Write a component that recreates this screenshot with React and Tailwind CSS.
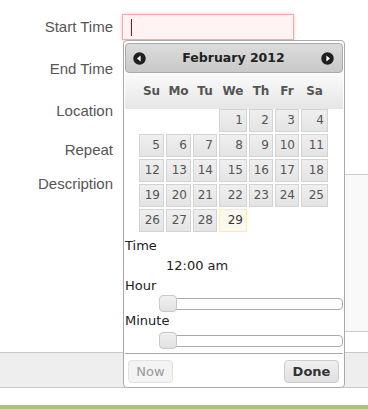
import React from 'react';

const dejavu = { fontFamily: '"DejaVu Sans", Verdana, sans-serif' };

const weekdays = ['Su', 'Mo', 'Tu', 'We', 'Th', 'Fr', 'Sa'];

// February 2012 starts on a Wednesday
const days = [null, null, null, ...Array.from({ length: 29 }, (_, i) => i + 1)];

function Arrow({ dir }) {
  return (
    <svg width="13" height="13" viewBox="0 0 13 13">
      <circle cx="6.5" cy="6.5" r="6.2" fill="#1f1f1f" />
      {dir === 'prev' ? <path d="M4 6.5 L7.6 3.6 L7.6 9.4 Z" fill="#fff" /> : <path d="M9 6.5 L5.4 3.6 L5.4 9.4 Z" fill="#fff" />}
    </svg>
  );
}

function Slider() {
  return (
    <div className="relative ml-[34px] h-[17px] flex items-center">
      <div className="w-full h-[12px] border border-[#aaa] rounded-[4px] bg-white" />
      <div className="absolute left-0 top-0 w-[18px] h-[17px] rounded-[4px] border border-[#c8c8c8] bg-gradient-to-b from-[#f0f0f0] to-[#e2e2e2]" />
    </div>
  );
}

function FormRow({ label, height, children, className = '' }) {
  return (
    <div className={`flex items-center ${className}`} style={{ height }}>
      <div className="w-[113px] shrink-0 text-right text-[15px] text-[#555]">{label}</div>
      <div className="ml-[9px] flex-1">{children}</div>
    </div>
  );
}

function DatePicker() {
  return (
    <div className="absolute left-[123px] top-[40px] w-[222px] h-[348px] border border-[#aaa] rounded-[4px] bg-white px-[1px] pt-[2px]" style={dejavu}>
      <div className="h-[30px] border border-[#aaa] rounded-[4px] bg-gradient-to-b from-[#dcdcdc] to-[#c9c9c9] flex items-center justify-between pl-[7px] pr-[8px]">
        <Arrow dir="prev" />
        <span className="text-[12.5px] font-bold text-[#222]">February 2012</span>
        <Arrow dir="next" />
      </div>
      <div className="h-[36px] bg-gradient-to-b from-[#fbfbfb] to-[#e6e6e6]">
        <div className="ml-[14px] grid grid-cols-[25px_25px_24px_28px_24px_24px_27px] gap-x-[2px] h-full items-center">
          {weekdays.map(d => (
            <div key={d} className="text-center text-[12px] font-bold text-[#555]">{d}</div>
          ))}
        </div>
      </div>
      <div className="ml-[14px] grid grid-cols-[25px_25px_24px_28px_24px_24px_27px] gap-[2px]">
        {days.map((d, i) => d === null ? <div key={i} className="h-[23px]" /> : (
          <div key={i} className={`h-[23px] border text-right pr-[3px] text-[12px] leading-[21px] ${d === 29 ? 'border-[#fcefa1] bg-[#fbf9ee] text-[#363636]' : 'border-[#d3d3d3] bg-gradient-to-b from-[#efefef] to-[#e4e4e4] text-[#555]'}`}>
            {d}
          </div>
        ))}
      </div>
      <div className="text-[13px] text-[#222]">
        <div className="mt-[6px] h-[16px] leading-[16px]">Time</div>
        <div className="mt-[4px] h-[16px] leading-[16px] pl-[41px]">12:00 am</div>
        <div className="mt-[4px] h-[16px] leading-[16px]">Hour</div>
        <div className="mt-[1px]"><Slider /></div>
        <div className="mt-[1px] h-[16px] leading-[16px]">Minute</div>
        <div className="mt-[3px]"><Slider /></div>
      </div>
      <div className="mt-[4px] border-t border-[#aaa] pt-[6px] px-[3px] flex justify-between">
        <button className="w-[45px] h-[23px] rounded-[4px] border border-[#e2e2e2] bg-[#f3f3f3] text-[13px] text-[#999]" style={dejavu}>Now</button>
        <button className="w-[55px] h-[23px] mr-[1px] rounded-[4px] border border-[#ccc] bg-gradient-to-b from-[#f0f0f0] to-[#e0e0e0] text-[13px] font-bold text-[#333]" style={dejavu}>Done</button>
      </div>
    </div>
  );
}

export default function App() {
  return (
    <div className="relative w-[368px] h-[409px] bg-white overflow-hidden" style={{ fontFamily: '"Liberation Sans", Arial, sans-serif' }}>
      <div className="pt-[14px]">
        <FormRow label="Start Time" height={26}>
          <div className="w-[172px] h-[26px] border border-[#f6aaaa] bg-[#fff3f3] shadow-[0_0_3px_rgba(240,120,120,0.5)] flex items-center pl-[8px]">
            <div className="w-[1px] h-[17px] bg-[#d00000]" />
          </div>
        </FormRow>
        <FormRow label="End Time" height={26} className="mt-[16px]">
          <div className="ml-[1px] w-[171px] h-[26px] border border-[#ccc] bg-white" />
        </FormRow>
        <FormRow label="Location" height={26} className="mt-[16px]">
          <div className="ml-[1px] w-[171px] h-[26px] border border-[#ccc] bg-white" />
        </FormRow>
        <FormRow label="Repeat" height={21} className="mt-[16px]">
          <div className="ml-[1px] w-[120px] h-[21px] border border-[#ccc] bg-white" />
        </FormRow>
        <div className="flex mt-[13px]">
          <div className="w-[113px] shrink-0 text-right text-[15px] text-[#555] pt-[1px] leading-[18px]">Description</div>
          <div className="ml-[10px] w-[260px] h-[158px] border border-[#ccc] bg-[#f9f9f9] shrink-0" />
        </div>
      </div>
      <div className="mt-[20px] h-[36px] border-t border-b border-[#c8c8c8] bg-[#eeeeee]" />
      <div className="mt-[17px] h-[4px] bg-[#abc17c]" />
      <DatePicker />
    </div>
  );
}
